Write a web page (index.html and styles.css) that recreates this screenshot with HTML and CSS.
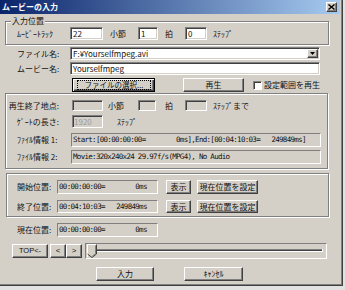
FILE: index.html
```html
<!DOCTYPE html>
<html lang="ja">
<head>
<meta charset="utf-8">
<title>ムービーの入力</title>
<link rel="stylesheet" href="styles.css">
</head>
<body>
<div class="window">
  <div class="titlebar">
    <span class="title">ムービーの入力</span>
    <span class="close"><svg width="7" height="6" viewBox="0 0 7 6"><path d="M0.5 0.5L6.5 5.5M6.5 0.5L0.5 5.5" stroke="#000" stroke-width="1.4"/></svg></span>
  </div>
  <div class="content">
    <div class="group g1">
      <span class="legend">入力位置</span>
      <div class="row">
        <span class="lbl track">ﾑｰﾋﾞｰﾄﾗｯｸ</span>
        <span class="edit e-bar">22</span>
        <span class="lbl unit-bar">小節</span>
        <span class="edit e-beat">1</span>
        <span class="lbl unit-beat">拍</span>
        <span class="edit e-step">0</span>
        <span class="lbl unit-step">ｽﾃｯﾌﾟ</span>
      </div>
    </div>

    <div class="row r-file">
      <span class="lbl name-lbl">ファイル名:</span>
      <span class="edit combo"><span class="combo-text">F:¥Yourselfmpeg.avi</span><span class="drop"><svg width="5" height="3" viewBox="0 0 5 3"><path d="M0 0H5L2.5 3Z" fill="#000"/></svg></span></span>
    </div>
    <div class="row r-movie">
      <span class="lbl name-lbl">ムービー名:</span>
      <span class="edit wide">Yourselfmpeg</span>
    </div>
    <div class="row r-btns">
      <span class="btn focus b-select"><span class="focus-rect">ファイルの選択...</span></span>
      <span class="btn b-play">再生</span>
      <span class="chk"></span>
      <span class="lbl chk-lbl">設定範囲を再生</span>
    </div>

    <div class="group g2">
      <div class="row r-end">
        <span class="lbl rlbl">再生終了地点:</span>
        <span class="edit dis e-bar2"></span>
        <span class="lbl unit-bar2">小節</span>
        <span class="edit dis e-beat2"></span>
        <span class="lbl unit-beat2">拍</span>
        <span class="edit dis e-step2"></span>
        <span class="lbl unit-step">ｽﾃｯﾌﾟまで</span>
      </div>
      <div class="row r-gate">
        <span class="lbl rlbl">ｹﾞｰﾄの長さ:</span>
        <span class="edit dis e-gate">1920</span>
        <span class="lbl unit-gate">ｽﾃｯﾌﾟ</span>
      </div>
      <div class="row r-info1">
        <span class="lbl info-lbl">ﾌｧｲﾙ情報 1:</span>
        <span class="static info">Start:[00:00:00:00=        0ms],End:[00:04:10:03=   249849ms]</span>
      </div>
      <div class="row r-info2">
        <span class="lbl info-lbl">ﾌｧｲﾙ情報 2:</span>
        <span class="static info">Movie:320x240x24 29.97f/s(MPG4), No Audio</span>
      </div>
    </div>

    <div class="group g3">
      <div class="row r-start">
        <span class="lbl pos-lbl">開始位置:</span>
        <span class="static time">00:00:00:00=        0ms</span>
        <span class="btn b-show">表示</span>
        <span class="btn b-set">現在位置を設定</span>
      </div>
      <div class="row r-stop">
        <span class="lbl pos-lbl">終了位置:</span>
        <span class="static time">00:04:10:03=   249849ms</span>
        <span class="btn b-show">表示</span>
        <span class="btn b-set">現在位置を設定</span>
      </div>
    </div>

    <div class="row r-now">
      <span class="lbl now-lbl">現在位置:</span>
      <span class="static time">00:00:00:00=        0ms</span>
    </div>

    <div class="row r-nav">
      <span class="btn b-top">TOP&lt;-</span>
      <span class="btn b-arrow b-prev">&lt;</span>
      <span class="btn b-arrow">&gt;</span>
      <span class="slider">
        <svg width="240" height="14" viewBox="0 0 240 14">
          <rect x="4" y="5" width="233" height="1" fill="#808080"/>
          <rect x="4" y="6" width="232" height="1" fill="#404040"/>
          <rect x="4" y="7" width="233" height="1" fill="#fff"/>
          <rect x="236" y="5" width="1" height="3" fill="#fff"/>
          <path d="M1.5 0.5H10.5V10L6 13.5L1.5 10Z" fill="#d4d0c8"/>
          <path d="M1.5 13V0.5H10.5" fill="none" stroke="#fff"/>
          <path d="M10.5 0.5V10L6 13.5L1.5 10" fill="none" stroke="#404040"/>
          <path d="M9.5 1.5V9.6L6 12.4" fill="none" stroke="#808080"/>
        </svg>
      </span>
    </div>

    <div class="row r-ok">
      <span class="btn b-ok">入力</span>
      <span class="btn b-cancel">ｷｬﾝｾﾙ</span>
    </div>
  </div>
</div>
</body>
</html>
```

FILE: styles.css
```css
* { box-sizing: border-box; }
html, body { margin: 0; padding: 0; }
body {
  width: 345px;
  height: 290px;
  overflow: hidden;
  background: #e2e2e2;
  font-family: "Noto Sans CJK JP", "Noto Sans", sans-serif;
  font-size: 8px;
  line-height: 1;
  color: #111;
}
.window {
  width: 343px;
  height: 286px;
  background: #d4d0c8;
  border-right: 1px solid #404040;
  border-bottom: 1px solid #404040;
  box-shadow: inset -1px -1px #808080;
  display: flex;
  flex-direction: column;
}
.titlebar {
  height: 14px;
  margin-right: 2px;
  background: linear-gradient(to right, #0a246a, #a6caf0);
  display: flex;
  align-items: center;
  justify-content: space-between;
  padding: 0 3px 0 2px;
  flex: none;
}
.title { color: #fff; font-weight: bold; font-size: 8px; }
.close {
  width: 11px;
  height: 10px;
  background: #d4d0c8;
  border: 1px solid;
  border-color: #fff #404040 #404040 #fff;
  box-shadow: inset -1px -1px #808080;
  display: flex;
  align-items: center;
  justify-content: center;
}
.content { padding-left: 5px; display: flex; flex-direction: column; }
.row { display: flex; align-items: center; }
.lbl { white-space: nowrap; flex: none; }

.group {
  position: relative;
  border: 1px solid #808080;
  box-shadow: inset 1px 1px #fff, 1px 1px #fff;
  flex: none;
}
.legend {
  position: absolute;
  top: -6px;
  left: 5px;
  padding: 0 1px;
  background: #d4d0c8;
  line-height: 10px;
}

/* edits */
.edit {
  height: 13px;
  background: #fff;
  border: 1px solid;
  border-color: #808080 #fff #fff #808080;
  box-shadow: inset 1px 1px #404040, inset -1px -1px #d4d0c8;
  padding-left: 2px;
  display: flex;
  align-items: center;
  white-space: nowrap;
  flex: none;
  font-size: 8px;
}
.edit.dis { background: #d4d0c8; color: #9a9a9a; }

/* group 1 */
.g1 { margin-top: 7px; width: 324px; padding: 5px 0 4px 0; }
.track { width: 64px; padding-left: 11px; }
.e-bar { width: 33px; }
.unit-bar { width: 35px; padding-left: 7px; }
.e-beat { width: 20px; }
.unit-beat { width: 27px; padding-left: 7px; }
.e-step { width: 22px; }
.unit-step { padding-left: 6px; }

/* file rows */
.r-file { margin-top: 2px; }
.r-movie { margin-top: 2px; }
.name-lbl { width: 65px; padding-left: 12px; }
.combo { width: 250px; justify-content: space-between; padding-right: 1px; }
.wide { width: 250px; }
.drop {
  width: 11px;
  height: 9px;
  background: #d4d0c8;
  border: 1px solid;
  border-color: #fff #404040 #404040 #fff;
  box-shadow: inset -1px -1px #808080;
  display: flex;
  align-items: center;
  justify-content: center;
}

/* buttons */
.btn {
  height: 14px;
  background: #d4d0c8;
  border: 1px solid;
  border-color: #fff #404040 #404040 #fff;
  box-shadow: inset -1px -1px #808080;
  display: flex;
  align-items: center;
  justify-content: center;
  white-space: nowrap;
  flex: none;
}
.btn.focus {
  border-color: #000;
  box-shadow: inset 1px 1px #fff, inset -1px -1px #404040, inset -2px -2px #808080;
  padding: 1px 3px 1px 4px;
}
.focus-rect {
  align-self: stretch;
  flex: 1;
  border: 1px dotted #000;
  display: flex;
  align-items: center;
  justify-content: center;
  font-size: 7.5px;
}
.r-btns { margin-top: 3px; }
.b-select { margin-left: 67px; width: 83px; }
.b-play { margin-left: 28px; width: 61px; }
.chk {
  margin-left: 9px;
  width: 9px;
  height: 9px;
  background: #fff;
  border: 1px solid;
  border-color: #808080 #fff #fff #808080;
  box-shadow: inset 1px 1px #404040;
  flex: none;
}
.chk-lbl { margin-left: 2px; }

/* static fields */
.static {
  height: 14px;
  background: #d4d0c8;
  border: 1px solid;
  border-color: #808080 #fff #fff #808080;
  font-family: "DejaVu Sans Mono", monospace;
  font-size: 7.5px;
  letter-spacing: -0.7px;
  white-space: pre;
  padding-left: 1px;
  display: flex;
  align-items: center;
  flex: none;
}

/* group 2 */
.g2 { margin-top: 1px; width: 323px; padding: 6px 0 4px 0; }
.rlbl { width: 66px; text-align: right; padding-right: 13px; }
.r-end .edit { height: 11px; }
.e-bar2 { width: 31px; }
.unit-bar2 { width: 35px; padding-left: 5px; }
.e-beat2 { width: 18px; }
.unit-beat2 { width: 29px; padding-left: 9px; }
.e-step2 { width: 22px; }
.r-gate { margin-top: 4px; }
.e-gate { width: 31px; padding-left: 1px; }
.unit-gate { padding-left: 14px; }
.r-info1 { margin-top: 5px; }
.r-info2 { margin-top: 3px; }
.info-lbl { width: 65px; padding-left: 11px; }
.info { width: 250px; }

/* group 3 */
.g3 { margin-top: 4px; margin-left: 1px; width: 323px; padding: 6px 0 3px 0; }
.r-stop { margin-top: 6px; }
.r-stop .static, .r-stop .btn { height: 13px; }
.pos-lbl { width: 50px; padding-left: 10px; }
.time { width: 101px; }
.b-show { margin-left: 8px; width: 25px; }
.b-set { margin-left: 6px; width: 61px; }

.r-now { margin-top: 6px; }
.now-lbl { width: 52px; padding-left: 12px; }

/* nav */
.r-nav { margin-top: 6px; }
.b-top { margin-left: 7px; width: 36px; font-family: "Liberation Sans", sans-serif; font-size: 7.5px; }
.b-arrow { width: 16px; font-family: "Liberation Sans", sans-serif; }
.b-prev { margin-left: 2px; }
.slider {
  margin-left: 3px;
  width: 242px;
  height: 16px;
  border: 1px solid;
  border-color: #808080 #fff #fff #808080;
  display: flex;
  align-items: center;
  flex: none;
}

.r-ok { margin-top: 8px; }
.b-ok { margin-left: 91px; width: 58px; }
.b-cancel { margin-left: 30px; width: 59px; }
```
